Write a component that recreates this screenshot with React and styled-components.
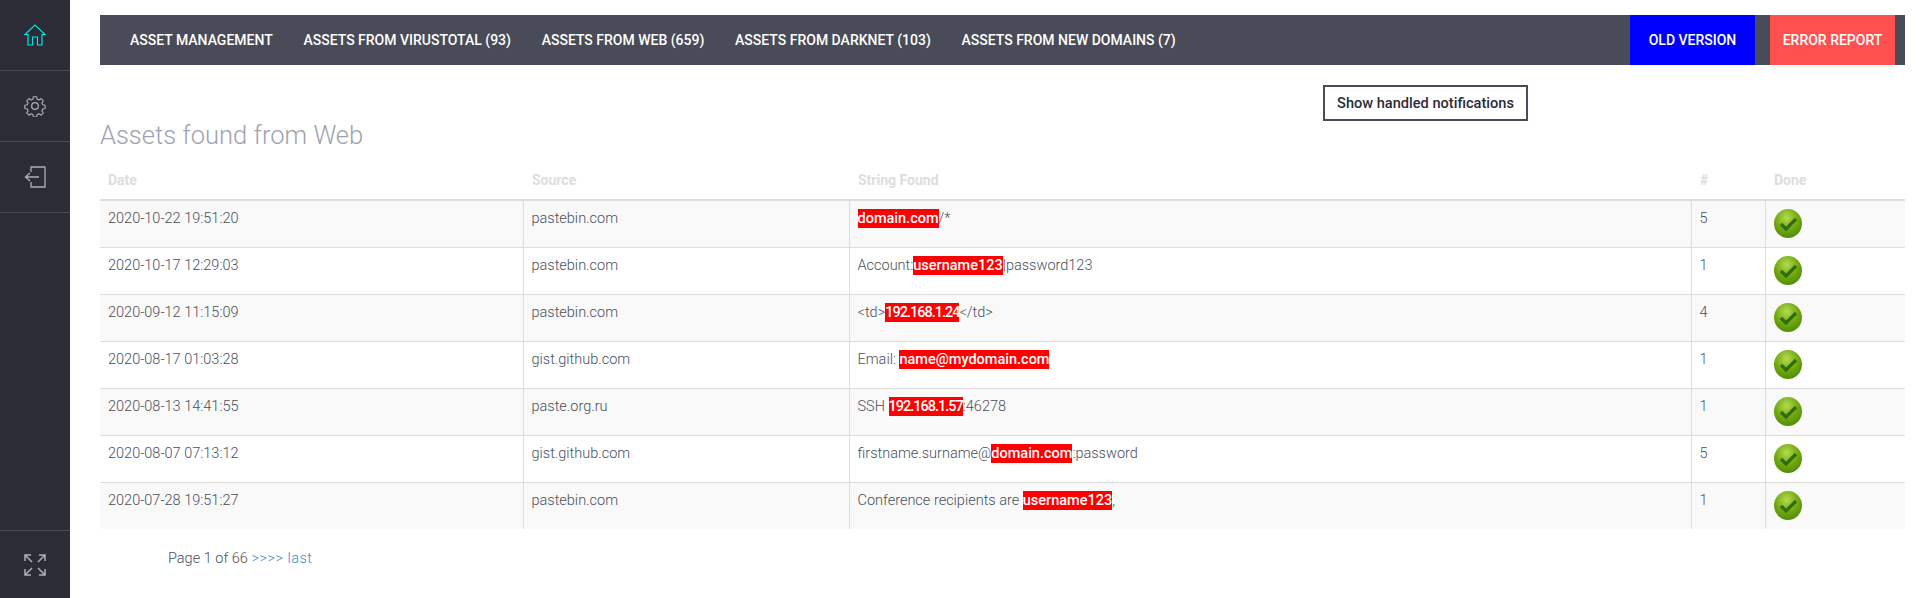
import React from 'react';
import styled, {createGlobalStyle} from 'styled-components';

const Global = createGlobalStyle`
  html, body {
    margin: 0;
    padding: 0;
    background: #fff;
  }
  body {
    font-family: Roboto, "Noto Sans", sans-serif;
    font-weight: 300;
    color: #4a4f5c;
  }
`
const Page = styled.div`
  display: flex;
  height: 598px;
  overflow: hidden;
`
const Sidebar = styled.aside`
  width: 70px;
  flex: none;
  background: #2b2c36;
  display: flex;
  flex-direction: column;
`
const SideItem = styled.div`
  height: 70px;
  display: flex;
  align-items: center;
  justify-content: center;
  color: ${p => (p.$active ? '#00e5e0' : '#aeafb6')};
  border-bottom: 1px solid #4a4b55;
`
const SideBottom = styled.div`
  margin-top: auto;
  height: 67px;
  border-top: 1px solid #4a4b55;
  display: flex;
  align-items: center;
  justify-content: center;
  color: #aeafb6;
`
const Main = styled.main`
  flex: 1;
  padding: 15px 13px 0 30px;
  min-width: 0;
`
const Nav = styled.nav`
  height: 50px;
  background: #4a4b58;
  display: flex;
  align-items: stretch;
  padding: 0 10px 0 30px;
`
const NavLink = styled.a`
  display: flex;
  align-items: center;
  margin-right: 30.7px;
  color: #fff;
  font-size: 14px;
  font-weight: 500;
  white-space: nowrap;
`
const NavButton = styled.a`
  width: ${p => p.$width}px;
  margin-left: ${p => p.$left || 0}px;
  background: ${p => p.$color};
  color: #fff;
  display: flex;
  align-items: center;
  justify-content: center;
  font-size: 14px;
  font-weight: 500;
`
const Spacer = styled.div`
  flex: 1;
`
const ToolRow = styled.div`
  display: flex;
  justify-content: flex-end;
  padding: 20px 377px 0 0;
`
const OutlineButton = styled.button`
  width: 205px;
  height: 36px;
  box-sizing: border-box;
  background: #fff;
  border: 2px solid #4a4b58;
  color: #2b2c36;
  font-family: inherit;
  font-size: 14.6px;
  font-weight: 500;
  padding: 0;
`
const Title = styled.h2`
  margin: 0;
  height: 44px;
  line-height: 28px;
  font-size: 25.5px;
  font-weight: 300;
  color: #9fa3b0;
`
const Table = styled.table`
  width: 100%;
  border-collapse: collapse;
  table-layout: fixed;
  font-size: 14.5px;
`
const Th = styled.th`
  height: 35px;
  box-sizing: border-box;
  padding: 0 8px 4px;
  text-align: left;
  font-size: 14px;
  font-weight: 700;
  color: #dddddd;
  border-bottom: 2px solid #dddddd;

  & + & {
    padding-left: 9px;
  }
`
const Row = styled.tr`
  background: ${p => (p.$odd ? '#f9f9f9' : '#fff')};
`
const Td = styled.td`
  height: 47px;
  box-sizing: border-box;
  padding: 8px 8px 0;
  vertical-align: top;
  line-height: 20px;
  border-top: 1px solid #dddddd;
  border-left: ${p => (p.$first ? 'none' : '1px solid #dddddd')};
`
const Hit = styled.span`
  display: inline-block;
  background: #ff0000;
  color: #fff;
  font-weight: 500;
  line-height: 19px;
  letter-spacing: ${p => p.$spacing || 0}px;
`
const CheckSvg = styled.svg`
  display: block;
`
const Pager = styled.div`
  padding: 20px 0 0 68px;
  font-size: 14.5px;
  line-height: 20px;
`
const PagerLink = styled.a`
  color: #428bca;
  letter-spacing: 0.5px;
`

const HomeIcon = () => (
    <svg width="22" height="22" viewBox="0 0 22 22" fill="none" stroke="currentColor" strokeWidth="1.2">
        <path d="M1 10.5 11 1l10 9.5h-3V21h-4.5v-8h-5v8H4V10.5z"/>
    </svg>
)
const GearIcon = () => (
    <svg width="22" height="22" viewBox="0 0 24 24" fill="none" stroke="currentColor" strokeWidth="1.4" strokeLinejoin="round">
        <circle cx="12" cy="12" r="3.6"/>
        <path d="M10 1.5h4l.6 3 2.3 1 2.6-1.7 2.8 2.8-1.7 2.6 1 2.3 2.9.6v4l-2.9.6-1 2.3 1.7 2.6-2.8 2.8-2.6-1.7-2.3 1-.6 2.9h-4l-.6-2.9-2.3-1-2.6 1.7-2.8-2.8 1.7-2.6-1-2.3-3-.6v-4l3-.6 1-2.3-1.7-2.6 2.8-2.8 2.6 1.7 2.3-1z" transform="translate(12 12) scale(.88) translate(-12 -13)"/>
    </svg>
)
const ExitIcon = () => (
    <svg width="22" height="22" viewBox="0 0 22 22" fill="none" stroke="currentColor" strokeWidth="1.3">
        <path d="M7 6V1h14v20H7v-5"/>
        <path d="M15 11H2M6 7l-4.500 4L6 15"/>
    </svg>
)
const ExpandIcon = () => (
    <svg width="22" height="22" viewBox="0 0 22 22" fill="none" stroke="currentColor" strokeWidth="1.5">
        <path d="M1 7V1h6M1 1l7 7M15 1h6v6M21 1l-7 7M1 15v6h6M1 21l7-7M21 15v6h-6M21 21l-7-7"/>
    </svg>
)
const CheckIcon = ({id}) => (
    <CheckSvg width="28" height="29" viewBox="0 0 28 29">
        <defs>
            <radialGradient id={id} cx="45%" cy="30%" r="75%">
                <stop offset="0" stopColor="#b4dc50"/>
                <stop offset=".55" stopColor="#72a810"/>
                <stop offset="1" stopColor="#4a8a06"/>
            </radialGradient>
        </defs>
        <ellipse cx="14" cy="14.5" rx="14" ry="14.500" fill={`url(#${id})`}/>
        <path d="M7 15l5 5 10-10" fill="none" stroke="#2f6d08" strokeWidth="3.200"/>
    </CheckSvg>
)

const rows = [
    ['2020-10-22 19:51:20', 'pastebin.com', '', 'domain.com', '/*', 5],
    ['2020-10-17 12:29:03', 'pastebin.com', 'Account:', 'username123', '|password123', 1],
    ['2020-09-12 11:15:09', 'pastebin.com', '<td>', '192.168.1.24', '</td>', 4, -1],
    ['2020-08-17 01:03:28', 'gist.github.com', 'Email: ', 'name@mydomain.com', '', 1],
    ['2020-08-13 14:41:55', 'paste.org.ru', 'SSH ', '192.168.1.57', ':46278', 1, -1],
    ['2020-08-07 07:13:12', 'gist.github.com', 'firstname.surname@', 'domain.com', ':password', 5],
    ['2020-07-28 19:51:27', 'pastebin.com', 'Conference recipients are ', 'username123', ',', 1],
]

const App = () => {
    return (
        <Page>
            <Global/>
            <Sidebar>
                <SideItem $active><HomeIcon/></SideItem>
                <SideItem><GearIcon/></SideItem>
                <SideItem><ExitIcon/></SideItem>
                <SideBottom><ExpandIcon/></SideBottom>
            </Sidebar>
            <Main>
                <Nav>
                    <NavLink>ASSET MANAGEMENT</NavLink>
                    <NavLink>ASSETS FROM VIRUSTOTAL (93)</NavLink>
                    <NavLink>ASSETS FROM WEB (659)</NavLink>
                    <NavLink>ASSETS FROM DARKNET (103)</NavLink>
                    <NavLink>ASSETS FROM NEW DOMAINS (7)</NavLink>
                    <Spacer/>
                    <NavButton $width={125} $color="#0000ff">OLD VERSION</NavButton>
                    <NavButton $width={125} $left={15} $color="#ff5050">ERROR REPORT</NavButton>
                </Nav>
                <ToolRow>
                    <OutlineButton>Show handled notifications</OutlineButton>
                </ToolRow>
                <Title>Assets found from Web</Title>
                <Table>
                    <colgroup>
                        <col style={{width: 423}}/>
                        <col style={{width: 326}}/>
                        <col style={{width: 842}}/>
                        <col style={{width: 74}}/>
                        <col/>
                    </colgroup>
                    <thead>
                        <tr>
                            <Th>Date</Th>
                            <Th>Source</Th>
                            <Th>String Found</Th>
                            <Th>#</Th>
                            <Th>Done</Th>
                        </tr>
                    </thead>
                    <tbody>
                        {rows.map((r, i) => (
                            <Row key={r[0]} $odd={i % 2 === 0}>
                                <Td $first>{r[0]}</Td>
                                <Td>{r[1]}</Td>
                                <Td>{r[2]}<Hit $spacing={r[6]}>{r[3]}</Hit>{r[4]}</Td>
                                <Td>{r[5]}</Td>
                                <Td><CheckIcon id={`chk${i}`}/></Td>
                            </Row>
                        ))}
                    </tbody>
                </Table>
                <Pager>Page 1 of 66 <PagerLink>&gt;&gt;&gt;&gt; last</PagerLink></Pager>
            </Main>
        </Page>
    );
};

export default App;
